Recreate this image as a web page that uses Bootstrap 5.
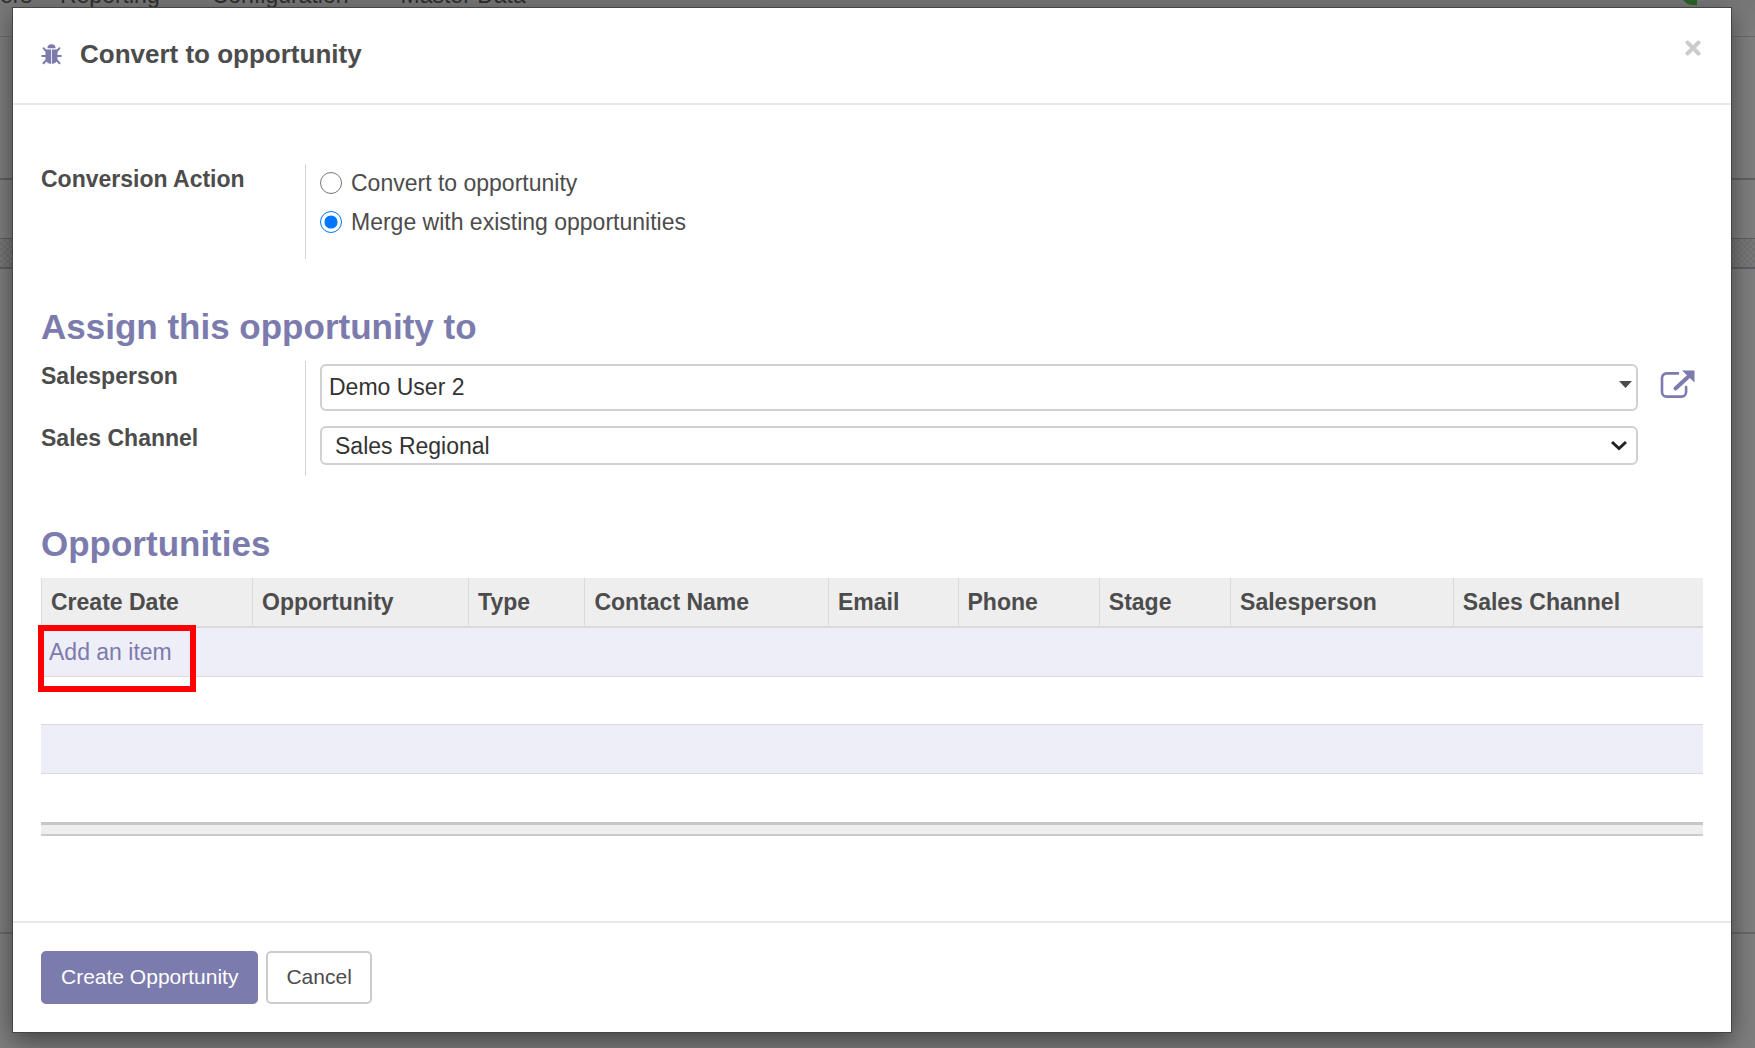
<!DOCTYPE html>
<html lang="en">
<head>
<meta charset="utf-8">
<meta name="viewport" content="width=device-width, initial-scale=1">
<title>Convert to opportunity</title>
<link href="https://cdn.jsdelivr.net/npm/bootstrap@5.3.0/dist/css/bootstrap.min.css" rel="stylesheet">
<style>
  :root { --brand: #7c7bad; --ink: #4c4c4c; }
  body { font-family: "Liberation Sans", Arial, sans-serif; font-size: 23px; line-height: 30px; color: var(--ink); background: #7e7e7e; overflow: hidden; }

  /* dimmed application behind the dialog */
  .app { position: fixed; inset: 0; overflow: hidden; background: #7e7e7e; color: #2e2e2e; }
  .app-menu { height: 37px; border-bottom: 1px solid #6a6a6a; background: linear-gradient(#777, #7e7e7e); }
  .app-menu a { color: inherit; text-decoration: none; margin-top: -20px; }
  .app-links { gap: 52px; }
  .app-status { width: 24px; height: 24px; margin: -19px 50px 0 0; border-radius: 50% 50% 0 50%; background: #2a642a; clip-path: inset(0 8px 0 0); }
  .app-panel { height: 143px; border-bottom: 2px solid #616161; }
  .app-strip { height: 58px; }
  .app-pattern { height: 31px; border: solid #5e5e66; border-width: 1px 0 2px; background: repeating-conic-gradient(#727272 0 25%, #797979 0 50%) 0 0 / 6px 6px; }
  .app-sheet { height: 665px; border-bottom: 2px solid #686868; }

  .modal-dialog { max-width: none; margin: 8px 24px 16px 13px; }
  .modal-content { border: 0; border-radius: 0; color: inherit; box-shadow: 0 0 0 1px #454545, 0 8px 24px rgba(0, 0, 0, .5); }
  .modal-header { height: 97px; padding: 0 28px; border-bottom: 2px solid #e8e8e8; border-radius: 0; align-items: flex-start; }
  .modal-title { font-size: 26px; line-height: 30px; font-weight: 700; margin-top: 31px; gap: 18px; }
  .bug { margin-top: 5px; }
  .close-x { border: 0; background: none; padding: 0; margin-top: 32px; width: 20px; height: 16px; line-height: 0; }
  .modal-body { padding: 59px 28px 85px; }
  .modal-footer { padding: 28px; gap: 8px; border-top: 2px solid #e8e8e8; border-radius: 0; justify-content: flex-start; }
  .modal-footer > * { margin: 0; }
  .modal-footer .btn { height: 53px; padding: 0 18px 2px; font-size: 21px; line-height: 30px; border-radius: 5px; border-width: 2px; }
  .btn-brand, .btn-brand:hover { background: var(--brand); border-color: var(--brand); color: #fff; }
  .btn-plain, .btn-plain:hover { background: #fff; border-color: #ccc; color: var(--ink); }

  .form-line { display: flex; }
  .line-label { width: 264px; flex: none; font-weight: 700; }
  .line-field { flex: 1; border-left: 1px solid #d4d4d4; padding-left: 14px; }
  .line-action { height: 95px; }
  .line-person { height: 62px; }
  .line-channel { height: 53px; }
  .pick { height: 36px; margin-bottom: 3px; gap: 9px; padding-top: 2px; }
  .pick input { width: 22px; height: 22px; margin: 0; accent-color: #0075ff; }
  .section-title { font-size: 35px; line-height: 40px; font-weight: 700; color: var(--brand); margin: 48px 0 14px; }
  .controls { display: flex; gap: 22px; padding-top: 3px; }
  .slot { width: 43px; flex: none; line-height: 0; padding-top: 5px; }
  .combo { flex: 1; position: relative; }
  .combo input, .combo select { width: 100%; border: 2px solid #d0d0d0; border-radius: 6px; background: #fff; color: #333; appearance: none; display: block; line-height: 30px; }
  .combo input { height: 47px; padding: 0 40px 0 7px; }
  .combo select { height: 39px; padding: 0 40px 0 13px; }
  .combo svg { position: absolute; pointer-events: none; }
  .caret { right: 6px; top: 17px; }
  .chevron { right: 10px; top: 14px; }

  .list { width: 100%; table-layout: fixed; border-collapse: separate; border-spacing: 0; }
  .list th { height: 50px; padding: 9px 8px 9px 9px; background: #eee; border: 0 solid #dadada; border-left-width: 1px; border-bottom-width: 2px; line-height: 30px; color: var(--ink); }
  .list td { height: 48px; padding: 0 8px; border-bottom: 1px solid #dadadc; }
  .list tbody tr:nth-child(odd) td { height: 49px; background: #eeeef8; }
  .list tbody tr:last-child td { border-bottom: 0; }
  .list tfoot td { height: 14px; padding: 0; background: #eee; border-top: 3px solid #c6c6c6; border-bottom: 2px solid #cacaca; }
  .add-item { position: relative; color: var(--brand); text-decoration: none; }
  .add-item::after { content: ""; position: absolute; left: -11px; top: -14px; width: 158px; height: 67px; border: 6px solid #f00; }
</style>
<script src="https://cdn.jsdelivr.net/npm/bootstrap@5.3.0/dist/js/bootstrap.bundle.min.js"></script>
</head>
<body>
<div class="app">
  <nav class="app-menu d-flex justify-content-between align-items-start">
    <div class="app-links d-flex">
      <div class="d-flex"><a href="#">ers</a><a href="#" class="ms-4 ps-1">Reporting</a></div>
      <a href="#">Configuration</a><a href="#">Master Data</a>
    </div>
    <span class="app-status"></span>
  </nav>
  <div class="app-panel"></div>
  <div class="app-strip"></div>
  <div class="app-pattern"></div>
  <div class="app-sheet"></div>
</div>

<div class="modal d-block" tabindex="-1" role="dialog" aria-labelledby="dlg-title">
  <div class="modal-dialog">
    <div class="modal-content">
      <div class="modal-header justify-content-between">
        <h1 class="modal-title d-flex" id="dlg-title">
          <svg class="bug" width="21" height="21" viewBox="0 0 21 21" aria-hidden="true">
            <path fill="#7c7bad" d="M6.400 4.300a4.100 4.100 0 0 1 8.200 0zM4.500 5.500h5.600v14.300C6.500 19.700 4.500 17.500 4.500 14.500zM10.900 5.500h5.600v9c0 3-2 5.200-5.600 5.300z"/>
            <path fill="none" stroke="#7c7bad" stroke-width="2" stroke-linecap="round" d="M5.500 7.500 2.500 4.200M15.500 7.500l3-3.300M5 12H1.200M16 12h3.800M5.500 16l-3 3.200M15.500 16l3 3.200"/>
          </svg>
          <span>Convert to opportunity</span>
        </h1>
        <button type="button" class="close-x" aria-label="Close">
          <svg width="16" height="16" viewBox="0 0 16 16"><path d="M2.500 2.500l11 11M13.500 2.500l-11 11" stroke="#ccc" stroke-width="4" stroke-linecap="round"/></svg>
        </button>
      </div>

      <div class="modal-body">
        <div class="form-line line-action" role="radiogroup" aria-labelledby="act">
          <div class="line-label" id="act">Conversion Action</div>
          <div class="line-field">
            <div class="pick d-flex align-items-center"><input type="radio" name="action" id="r1"><label for="r1">Convert to opportunity</label></div>
            <div class="pick d-flex align-items-center"><input type="radio" name="action" id="r2" checked><label for="r2">Merge with existing opportunities</label></div>
          </div>
        </div>

        <h2 class="section-title">Assign this opportunity to</h2>
        <div class="form-line line-person">
          <label class="line-label" for="person">Salesperson</label>
          <div class="line-field">
            <div class="controls">
              <div class="combo">
                <input type="text" id="person" value="Demo User 2">
                <svg class="caret" width="13" height="7" viewBox="0 0 13 7"><path d="M0 0h13L6.500 7z" fill="#4c4c4c"/></svg>
              </div>
              <a class="slot" href="#" aria-label="Open record">
                <svg width="36" height="30" viewBox="0 0 36 30">
                  <path fill="none" stroke="#7c7bad" stroke-width="2.600" stroke-linecap="round" d="M18 4.400H6.500a4.500 4.500 0 0 0-4.500 4.500v14.200a4.500 4.500 0 0 0 4.500 4.500h15.100a4.500 4.500 0 0 0 4.500-4.500V18"/>
                  <path fill="none" stroke="#7c7bad" stroke-width="4" stroke-linecap="round" d="M15.500 19.500 28 8"/>
                  <path fill="#7c7bad" d="M22 1.500h12.500v12z"/>
                </svg>
              </a>
            </div>
          </div>
        </div>
        <div class="form-line line-channel">
          <label class="line-label" for="channel">Sales Channel</label>
          <div class="line-field">
            <div class="controls">
              <div class="combo">
                <select id="channel"><option>Sales Regional</option></select>
                <svg class="chevron" width="18" height="11" viewBox="0 0 18 11"><path d="M2 2l7 6.500L16 2" fill="none" stroke="#222" stroke-width="3"/></svg>
              </div>
              <span class="slot"></span>
            </div>
          </div>
        </div>

        <h2 class="section-title">Opportunities</h2>
        <table class="list">
          <colgroup>
            <col style="width:12.7%"><col style="width:13%"><col style="width:7%"><col style="width:14.65%"><col style="width:7.8%"><col style="width:8.5%"><col style="width:7.9%"><col style="width:13.4%"><col>
          </colgroup>
          <thead><tr><th>Create Date</th><th>Opportunity</th><th>Type</th><th>Contact Name</th><th>Email</th><th>Phone</th><th>Stage</th><th>Salesperson</th><th>Sales Channel</th></tr></thead>
          <tbody>
            <tr><td colspan="9"><a href="#" class="add-item">Add an item</a></td></tr>
            <tr><td colspan="9"></td></tr>
            <tr><td colspan="9"></td></tr>
            <tr><td colspan="9"></td></tr>
          </tbody>
          <tfoot><tr><td colspan="9"></td></tr></tfoot>
        </table>
      </div>

      <div class="modal-footer">
        <button type="button" class="btn btn-brand">Create Opportunity</button>
        <button type="button" class="btn btn-plain">Cancel</button>
      </div>
    </div>
  </div>
</div>
</body>
</html>
